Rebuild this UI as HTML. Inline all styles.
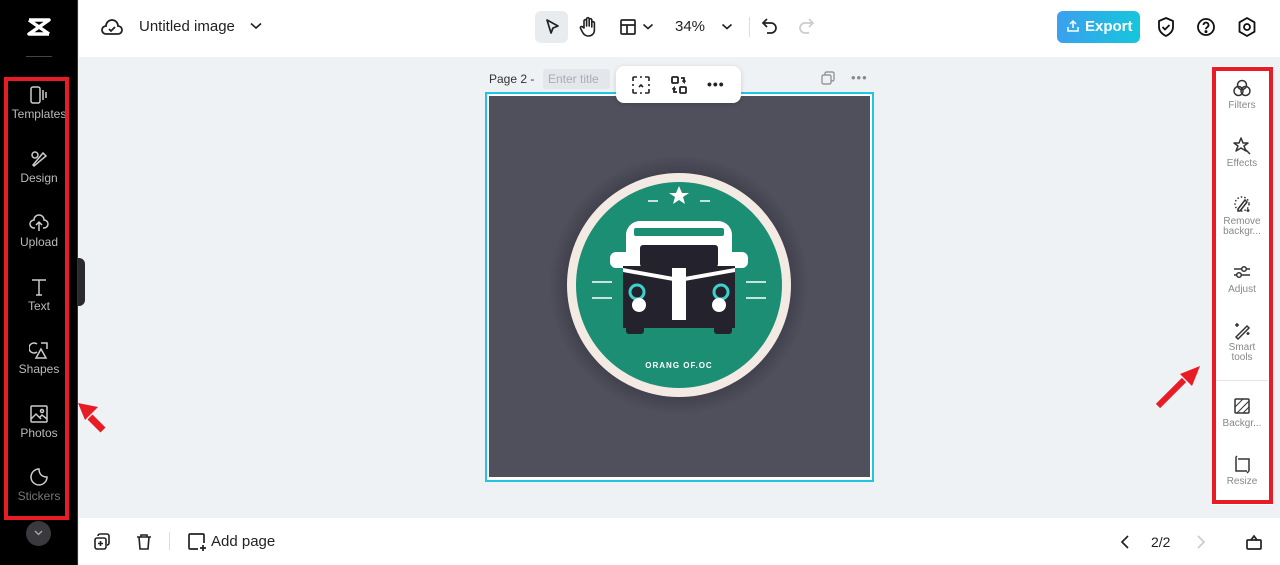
<!DOCTYPE html>
<html><head><meta charset="utf-8"><style>
*{margin:0;padding:0;box-sizing:border-box}
body{width:1280px;height:565px;overflow:hidden;font-family:"Liberation Sans",sans-serif;background:#eef2f5;position:relative}
.abs{position:absolute}
#side{left:0;top:0;width:78px;height:565px;background:#000;border-right:1px solid #333}
.si{position:absolute;left:0;width:78px;text-align:center;color:#bbb;font-size:12px}
.si svg{display:block;margin:0 auto 3px}
#top{left:79px;top:0;width:1201px;height:57px;background:#fff}
#bot{left:79px;top:518px;width:1201px;height:47px;background:#fff}
.rp{position:absolute;left:1212px;width:60px;text-align:center;color:#888;font-size:10px;line-height:10px}
.rp svg{display:block;margin:0 auto 3px}
</style></head><body>
<div id="side" class="abs">
 <svg class="abs" style="left:26px;top:17px" width="26" height="20" viewBox="0 0 26 20"><path d="M3 3h20L3 17h20M3 3l20 14" stroke="#fff" stroke-width="3.5" fill="none" stroke-linejoin="round"/></svg>
 <div class="abs" style="left:26px;top:56px;width:26px;height:1px;background:#444"></div>
 <div class="si" style="top:86px"><svg width="20" height="18" viewBox="0 0 20 18" fill="none" stroke="#ccc" stroke-width="1.5"><rect x="2" y="1" width="9" height="16" rx="2"/><path d="M14 4v10M17 6v6"/></svg>Templates</div>
 <div class="si" style="top:150px"><svg width="20" height="18" viewBox="0 0 20 18" fill="none" stroke="#ccc" stroke-width="1.5"><circle cx="6" cy="5" r="3"/><path d="M4 15l10-12 3 3-12 10z"/></svg>Design</div>
 <div class="si" style="top:214px"><svg width="20" height="18" viewBox="0 0 20 18" fill="none" stroke="#ccc" stroke-width="1.5"><path d="M6 14H5a4 4 0 010-8 5 5 0 0110 0 4 4 0 010 8h-1M10 17V8M7 11l3-3 3 3"/></svg>Upload</div>
 <div class="si" style="top:278px"><svg width="20" height="18" viewBox="0 0 20 18" fill="none" stroke="#ccc" stroke-width="1.5"><path d="M3 2h14M10 2v15M7 17h6"/></svg>Text</div>
 <div class="si" style="top:341px"><svg width="20" height="18" viewBox="0 0 20 18" fill="none" stroke="#ccc" stroke-width="1.5"><path d="M8 3a5 5 0 100 8M12 2h6v6M12 8l-5 9h10z"/></svg>Shapes</div>
 <div class="si" style="top:405px"><svg width="20" height="18" viewBox="0 0 20 18" fill="none" stroke="#ccc" stroke-width="1.5"><rect x="2" y="1" width="16" height="16" rx="1"/><path d="M2 14l5-5 5 5M11 12l2-2 5 4"/><circle cx="13" cy="6" r="1.5"/></svg>Photos</div>
 <div class="si" style="top:468px;color:#777"><svg width="20" height="18" viewBox="0 0 20 18" fill="none" stroke="#ccc" stroke-width="1.5"><path d="M18 9a8 8 0 11-8-8c0 5 3 8 8 8z"/></svg>Stickers</div>
 <div class="abs" style="left:26px;top:521px;width:25px;height:25px;border-radius:50%;background:#3a3a3e"></div>
 <svg class="abs" style="left:33px;top:529px" width="11" height="8"><path d="M2 2l3.5 3.5L9 2" stroke="#aaa" stroke-width="1.3" fill="none"/></svg>
</div>
<div class="abs" style="left:78px;top:258px;width:7px;height:48px;background:#2a2a2e;border-radius:0 6px 6px 0"></div>
<div class="abs" style="left:4px;top:77px;width:65px;height:443px;border:4px solid #e81c24"></div>

<div id="top" class="abs">
 <svg class="abs" style="left:22px;top:18px" width="22" height="18" viewBox="0 0 22 18" fill="none" stroke="#222" stroke-width="1.8"><path d="M6 16H5a4 4 0 010-8 6 6 0 0112 0 4 4 0 010 8H6z"/><path d="M8 11l2 2 4-4"/></svg>
 <div class="abs" style="left:60px;top:18px;font-size:15px;color:#222">Untitled image</div>
 <svg class="abs" style="left:171px;top:22px" width="12" height="8"><path d="M1 1.5l5 4.5 5-4.5" stroke="#222" stroke-width="1.6" fill="none"/></svg>
 <div class="abs" style="left:456px;top:11px;width:33px;height:32px;background:#e8ecef;border-radius:6px"></div>
 <svg class="abs" style="left:463px;top:17px" width="20" height="20" viewBox="0 0 20 20" fill="none" stroke="#222" stroke-width="1.7" stroke-linejoin="round"><path d="M5 3l11 6-5 2-2 5z"/></svg>
 <svg class="abs" style="left:499px;top:16px" width="20" height="22" viewBox="0 0 20 22" fill="none" stroke="#222" stroke-width="1.6" stroke-linejoin="round"><path d="M6 12V5a1.3 1.3 0 012.6 0v5V3a1.3 1.3 0 012.6 0v7V4a1.3 1.3 0 012.6 0v7V7a1.3 1.3 0 012.6 0v7c0 4-3 6-6 6s-5-2-6-4l-2-4a1.3 1.3 0 012.3-1z"/></svg>
 <svg class="abs" style="left:540px;top:18px" width="18" height="18" viewBox="0 0 18 18" fill="none" stroke="#222" stroke-width="1.7"><rect x="2" y="2" width="14" height="14" rx="1"/><path d="M2 7h14M8 7v9"/></svg>
 <svg class="abs" style="left:563px;top:23px" width="12" height="8"><path d="M1.5 1.5l4.5 4 4.5-4" stroke="#222" stroke-width="1.6" fill="none"/></svg>
 <div class="abs" style="left:596px;top:18px;font-size:15px;color:#222">34%</div>
 <svg class="abs" style="left:642px;top:23px" width="12" height="8"><path d="M1.5 1.5l4.5 4 4.5-4" stroke="#222" stroke-width="1.6" fill="none"/></svg>
 <div class="abs" style="left:670px;top:17px;width:1px;height:20px;background:#ddd"></div>
 <svg class="abs" style="left:682px;top:17px" width="18" height="18" viewBox="0 0 18 18" fill="none" stroke="#222" stroke-width="1.7"><path d="M6 2L2 6l4 4M2 6h8a5 5 0 010 10H6"/></svg>
 <svg class="abs" style="left:718px;top:17px" width="18" height="18" viewBox="0 0 18 18" fill="none" stroke="#ccc" stroke-width="1.7"><path d="M12 2l4 4-4 4M16 6H8a5 5 0 000 10h4"/></svg>
 <div class="abs" style="left:978px;top:11px;width:83px;height:32px;border-radius:6px;background:linear-gradient(90deg,#3aa0ef,#16c6dc)"></div>
 <svg class="abs" style="left:987px;top:19px" width="14" height="14" viewBox="0 0 14 14" fill="none" stroke="#fff" stroke-width="1.5"><path d="M2 8v4h10V8M7 9V2M4 5l3-3 3 3"/></svg>
 <div class="abs" style="left:1006px;top:18px;font-size:15px;font-weight:bold;color:#fff">Export</div>
 <svg class="abs" style="left:1077px;top:16px" width="20" height="22" viewBox="0 0 20 22" fill="none" stroke="#111" stroke-width="1.8" stroke-linejoin="round"><path d="M10 2l7 3v6c0 4-3 7-7 9-4-2-7-5-7-9V5z"/><path d="M6.5 11l2.5 2.5 4.5-4.5"/></svg>
 <svg class="abs" style="left:1117px;top:17px" width="20" height="20" viewBox="0 0 20 20" fill="none" stroke="#111" stroke-width="1.8"><circle cx="10" cy="10" r="8"/><path d="M7.5 8a2.5 2.5 0 114 2c-1 .6-1.5 1-1.5 2.2"/><circle cx="10" cy="14.6" r=".6" fill="#111"/></svg>
 <svg class="abs" style="left:1158px;top:16px" width="20" height="22" viewBox="0 0 20 22" fill="none" stroke="#111" stroke-width="1.8" stroke-linejoin="round"><path d="M10 2l7.5 4.3v9.4L10 20l-7.5-4.3V6.3z"/><circle cx="10" cy="11" r="3"/></svg>
</div>

<!-- canvas -->
<div class="abs" style="left:489px;top:72px;font-size:12px;color:#333">Page 2 -</div>
<div class="abs" style="left:543px;top:69px;width:67px;height:20px;background:#e3e7ea;border-radius:3px;font-size:12px;color:#aab;padding:3px 5px">Enter title</div>
<svg class="abs" style="left:821px;top:71px" width="14" height="14" viewBox="0 0 14 14" fill="none" stroke="#888" stroke-width="1.2"><rect x="1" y="4" width="9" height="9" rx="1.5"/><path d="M4 4V2.5A1.5 1.5 0 015.5 1h6A1.5 1.5 0 0113 2.5v6A1.5 1.5 0 0111.5 10H10"/></svg>
<div class="abs" style="left:851px;top:70px;font-size:13px;color:#888;letter-spacing:1px">•••</div>
<div class="abs" style="left:485px;top:92px;width:389px;height:390px;border:2px solid #22c4e0;background:#fff"></div>
<div class="abs" style="left:489px;top:96px;width:381px;height:381px;background:#50505c;overflow:hidden">
 <svg width="381" height="381" viewBox="489 96 381 381">
  <defs><radialGradient id="g"><stop offset="0.8" stop-color="#3c3c48"/><stop offset="1" stop-color="#50505c"/></radialGradient></defs>
  <circle cx="679" cy="285" r="130" fill="url(#g)"/>
  <circle cx="679" cy="285" r="112" fill="#f3ebe3"/>
  <circle cx="679" cy="285" r="103" fill="#1b8e74"/>
  <path d="M679 186l3 7h7l-6 4 2 7-6-4-6 4 2-7-6-4h7z" fill="#fff"/>
  <path d="M648 201h10M700 201h10" stroke="#fff" stroke-width="1.5"/>
  <rect x="626" y="221" width="106" height="100" rx="14" fill="#fff"/>
  <rect x="610" y="252" width="138" height="16" rx="6" fill="#fff"/>
  <rect x="634" y="228" width="90" height="8" rx="2" fill="#1b8e74"/>
  <rect x="640" y="245" width="78" height="22" rx="3" fill="#24222c"/>
  <path d="M623 266h112v62h-112z" fill="#24222c"/>
  <path d="M623 268l56 10 56-10v4l-56 10-56-10z" fill="#fff"/>
  <rect x="672" y="268" width="14" height="52" fill="#fff"/>
  <circle cx="637" cy="292" r="7" fill="none" stroke="#3bd2cc" stroke-width="3"/>
  <circle cx="721" cy="292" r="7" fill="none" stroke="#3bd2cc" stroke-width="3"/>
  <circle cx="639" cy="305" r="7" fill="#fff"/><circle cx="719" cy="305" r="7" fill="#fff"/>
  <rect x="626" y="320" width="18" height="14" rx="3" fill="#24222c"/><rect x="714" y="320" width="18" height="14" rx="3" fill="#24222c"/>
  <path d="M592 282h20M746 282h20M592 298h20M746 298h20" stroke="#fff" stroke-width="1.5"/>
  <text x="679" y="368" text-anchor="middle" font-size="8" fill="#fff" font-family="Liberation Sans" font-weight="bold" letter-spacing="1">ORANG OF.OC</text>
 </svg>
</div>
<div class="abs" style="left:616px;top:66px;width:125px;height:37px;background:#fff;border-radius:8px;box-shadow:0 1px 5px rgba(0,0,0,.15)"></div>
<svg class="abs" style="left:631px;top:75px" width="20" height="20" viewBox="0 0 20 20" fill="none" stroke="#222" stroke-width="1.6"><path d="M2 6V3a1 1 0 011-1h3M14 2h3a1 1 0 011 1v3M18 14v3a1 1 0 01-1 1h-3M6 18H3a1 1 0 01-1-1v-3M9 2h2M9 18h2M2 9v2M18 9v2M8 12l2-2 2 2"/></svg>
<svg class="abs" style="left:669px;top:75px" width="20" height="20" viewBox="0 0 20 20" fill="none" stroke="#222" stroke-width="1.8"><rect x="3" y="2" width="6" height="6" rx="1"/><rect x="11" y="12" width="6" height="6" rx="1"/><path d="M12 3h3v4l-1.5-1.5M15 7l1.5-1.5M8 17H5v-4l-1.5 1.5M5 13l1.5 1.5"/></svg>
<div class="abs" style="left:707px;top:76px;font-size:14px;color:#222;font-weight:bold;letter-spacing:1px">•••</div>

<!-- right panel -->
<div class="abs" style="left:1212px;top:66px;width:61px;height:439px;background:#fff"></div>
<div class="rp" style="top:78px"><svg width="20" height="20" viewBox="0 0 20 20" fill="none" stroke="#333" stroke-width="1.5"><circle cx="10" cy="7" r="4.5"/><circle cx="6.5" cy="13" r="4.5"/><circle cx="13.5" cy="13" r="4.5"/></svg>Filters</div>
<div class="rp" style="top:136px"><svg width="20" height="20" viewBox="0 0 20 20" fill="none" stroke="#333" stroke-width="1.5" stroke-linejoin="round"><path d="M9 2l2 5h5l-4 3 2 5-5-3-5 3 2-5-4-3h5zM14 14l4 4"/></svg>Effects</div>
<div class="rp" style="top:194px"><svg width="20" height="20" viewBox="0 0 20 20" fill="none" stroke="#333" stroke-width="1.5"><circle cx="10" cy="10" r="7" stroke-dasharray="1.5 2"/><path d="M6 15l7-9 2 2-7 9H6z"/><path d="M16 15v3M14.5 16.5h3"/></svg>Remove<br>backgr...</div>
<div class="rp" style="top:262px"><svg width="20" height="20" viewBox="0 0 20 20" fill="none" stroke="#333" stroke-width="1.5"><path d="M2 7h16M2 13h16"/><circle cx="12" cy="7" r="2.3" fill="#fff"/><circle cx="7" cy="13" r="2.3" fill="#fff"/></svg>Adjust</div>
<div class="rp" style="top:320px"><svg width="20" height="20" viewBox="0 0 20 20" fill="none" stroke="#333" stroke-width="1.5"><path d="M4 17L15 6l2 2L6 19zM5 3v4M3 5h4M16 12v3M14.5 13.5h3"/></svg>Smart<br>tools</div>
<div class="abs" style="left:1216px;top:380px;width:52px;height:1px;background:#e5e5e5"></div>
<div class="rp" style="top:396px"><svg width="20" height="20" viewBox="0 0 20 20" fill="none" stroke="#333" stroke-width="1.5"><rect x="3" y="3" width="14" height="14" rx="1"/><path d="M3 11l8-8M5 17l12-12M11 17l6-6" stroke-width="1"/></svg>Backgr...</div>
<div class="rp" style="top:454px"><svg width="20" height="20" viewBox="0 0 20 20" fill="none" stroke="#333" stroke-width="1.5"><path d="M4 3v14h11M6 5h11v10M4 3l1-1M17 17v-2M15 19l2-2"/></svg>Resize</div>
<div class="abs" style="left:1212px;top:67px;width:61px;height:437px;border:4px solid #e81c24"></div>

<div id="bot" class="abs">
 <svg class="abs" style="left:14px;top:15px" width="18" height="18" viewBox="0 0 18 18" fill="none" stroke="#222" stroke-width="1.6"><rect x="2" y="5" width="11" height="11" rx="2"/><path d="M5 3a2 2 0 012-2h7a2 2 0 012 2v7a2 2 0 01-2 2M7.5 8v5M5 10.5h5"/></svg>
 <svg class="abs" style="left:56px;top:15px" width="18" height="18" viewBox="0 0 18 18" fill="none" stroke="#222" stroke-width="1.6"><path d="M2 4h14M6 4V2h6v2M4 4l1 12h8l1-12"/></svg>
 <div class="abs" style="left:90px;top:14px;width:1px;height:18px;background:#ddd"></div>
 <svg class="abs" style="left:108px;top:14px" width="20" height="20" viewBox="0 0 20 20" fill="none" stroke="#222" stroke-width="1.7"><path d="M11 17H3a1 1 0 01-1-1V3a1 1 0 011-1h13a1 1 0 011 1v8M16 13v6M13 16h6"/></svg>
 <div class="abs" style="left:132px;top:15px;font-size:15px;color:#222">Add page</div>
 <svg class="abs" style="left:1040px;top:16px" width="12" height="16"><path d="M9 2L3 8l6 6" stroke="#222" stroke-width="1.7" fill="none"/></svg>
 <div class="abs" style="left:1072px;top:16px;font-size:14px;color:#222">2/2</div>
 <svg class="abs" style="left:1116px;top:16px" width="12" height="16"><path d="M3 2l6 6-6 6" stroke="#ccc" stroke-width="1.7" fill="none"/></svg>
 <svg class="abs" style="left:1166px;top:15px" width="18" height="18" viewBox="0 0 18 18" fill="none" stroke="#222" stroke-width="1.7"><rect x="2" y="7" width="14" height="9" rx="1"/><path d="M6 7l3-4 3 4"/></svg>
</div>

<!-- arrows -->
<svg class="abs" style="left:0;top:0" width="1280" height="565"><path d="M103 430L90 417" stroke="#e81c24" stroke-width="7"/><path d="M78 403l20 4-13 13z" fill="#e81c24"/>
<path d="M1158 406L1184 380" stroke="#e81c24" stroke-width="6"/><path d="M1200 366l-8 20-12-12z" fill="#e81c24"/></svg>
</body></html>
